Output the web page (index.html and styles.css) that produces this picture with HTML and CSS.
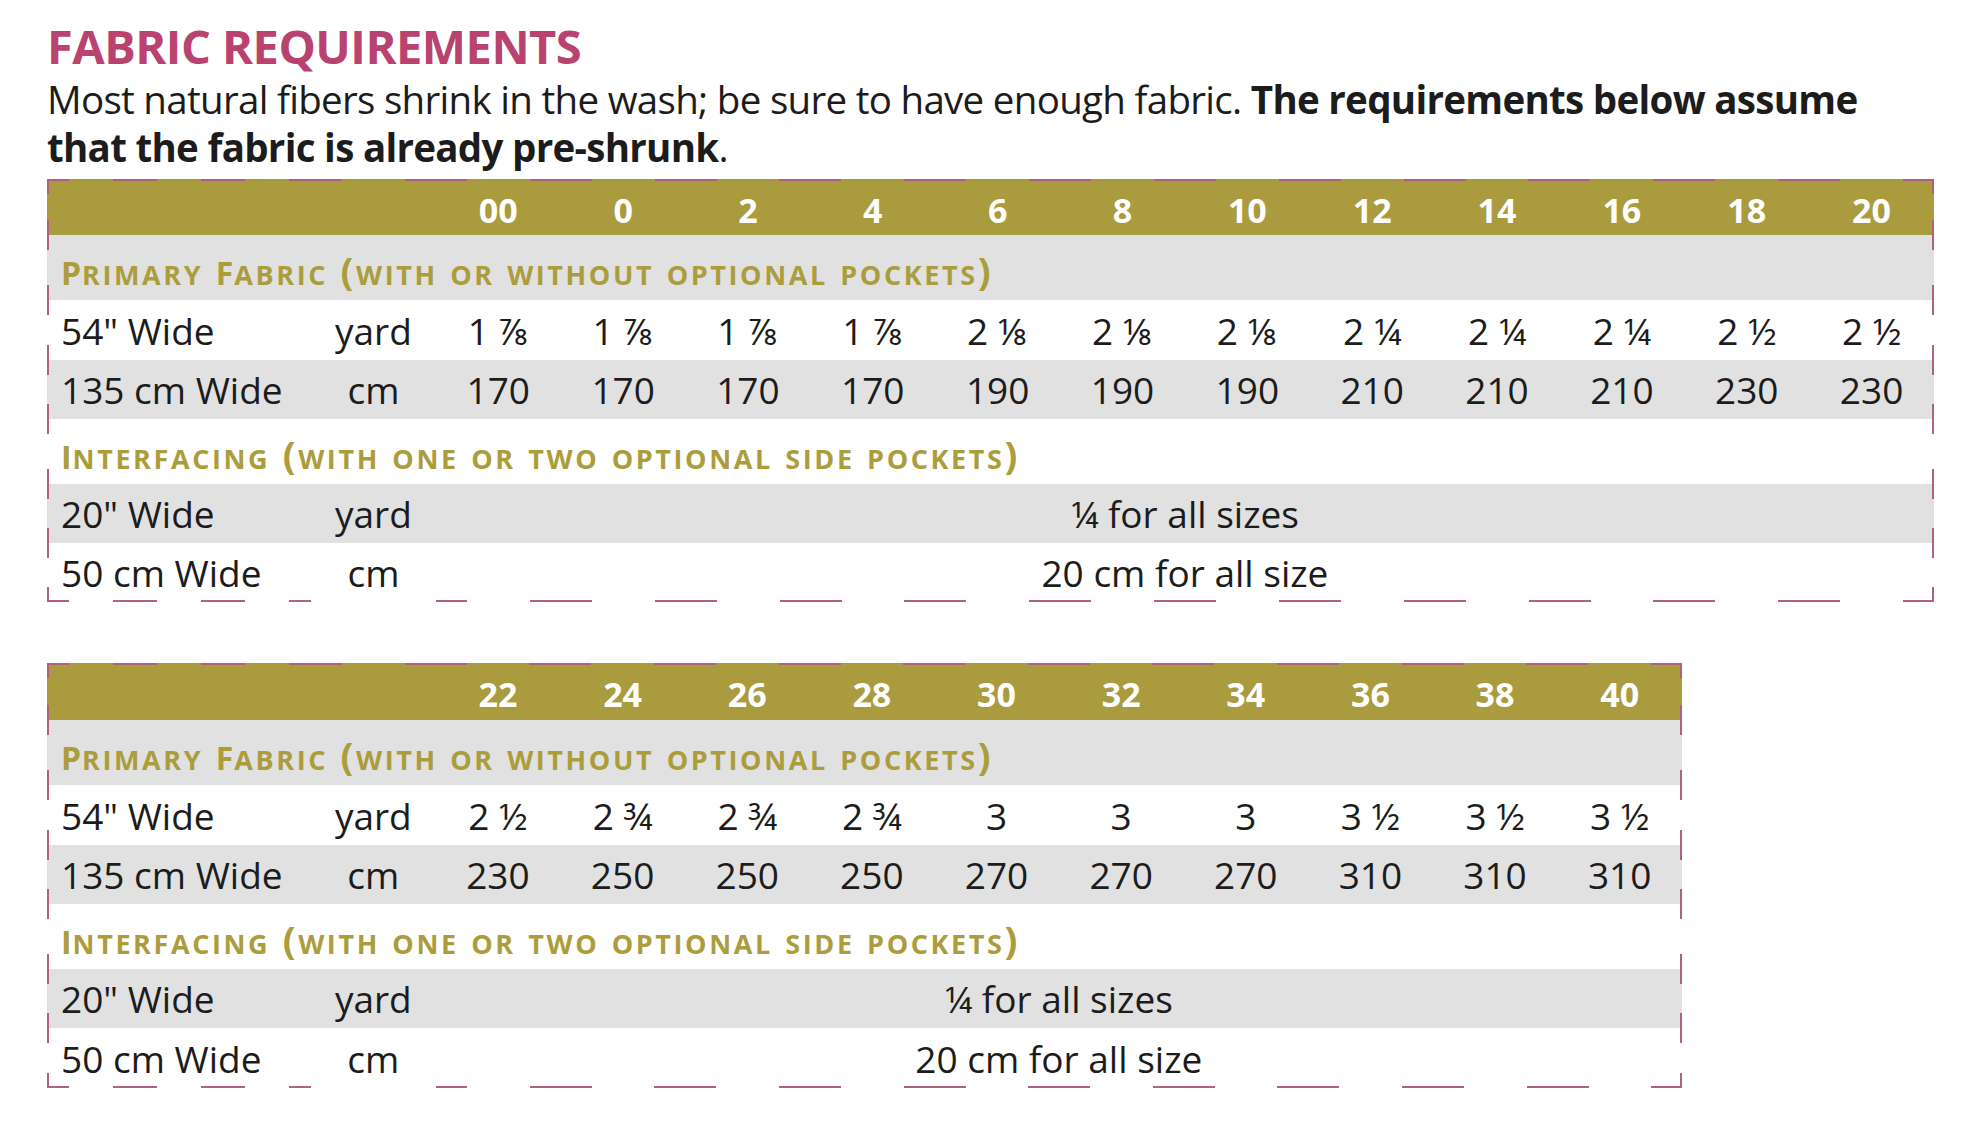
FILE: index.html
```html
<!DOCTYPE html>
<html lang="en">
<head>
<meta charset="utf-8">
<title>Fabric Requirements</title>
<link rel="stylesheet" href="styles.css">
</head>
<body>
<div class="page">
  <h1 class="title">FABRIC REQUIREMENTS</h1>
  <p class="intro">Most natural fibers shrink in the wash; be sure to have enough fabric. <b>The requirements below assume<br>that the fabric is already pre-shrunk</b>.</p>

  <div class="chart chart-wide">
    <div class="row row-head">
      <span class="cell label"></span><span class="cell unit"></span>
      <span class="cell">00</span><span class="cell">0</span><span class="cell">2</span><span class="cell">4</span><span class="cell">6</span><span class="cell">8</span><span class="cell">10</span><span class="cell">12</span><span class="cell">14</span><span class="cell">16</span><span class="cell">18</span><span class="cell">20</span>
    </div>
    <div class="row row-section gray">
      <span class="section-title"><span class="big">P</span>rimary <span class="big">F</span>abric (with or without optional pockets)</span>
    </div>
    <div class="row row-data">
      <span class="cell label">54" Wide</span><span class="cell unit">yard</span>
      <span class="cell">1 ⅞</span><span class="cell">1 ⅞</span><span class="cell">1 ⅞</span><span class="cell">1 ⅞</span><span class="cell">2 ⅛</span><span class="cell">2 ⅛</span><span class="cell">2 ⅛</span><span class="cell">2 ¼</span><span class="cell">2 ¼</span><span class="cell">2 ¼</span><span class="cell">2 ½</span><span class="cell">2 ½</span>
    </div>
    <div class="row row-data gray">
      <span class="cell label">135 cm Wide</span><span class="cell unit">cm</span>
      <span class="cell">170</span><span class="cell">170</span><span class="cell">170</span><span class="cell">170</span><span class="cell">190</span><span class="cell">190</span><span class="cell">190</span><span class="cell">210</span><span class="cell">210</span><span class="cell">210</span><span class="cell">230</span><span class="cell">230</span>
    </div>
    <div class="row row-section">
      <span class="section-title"><span class="big">I</span>nterfacing (with one or two optional side pockets)</span>
    </div>
    <div class="row row-data gray">
      <span class="cell label">20" Wide</span><span class="cell unit">yard</span>
      <span class="cell note">¼ for all sizes</span>
    </div>
    <div class="row row-data row-last">
      <span class="cell label">50 cm Wide</span><span class="cell unit">cm</span>
      <span class="cell note">20 cm for all size</span>
    </div>
  </div>

  <div class="chart chart-narrow">
    <div class="row row-head">
      <span class="cell label"></span><span class="cell unit"></span>
      <span class="cell">22</span><span class="cell">24</span><span class="cell">26</span><span class="cell">28</span><span class="cell">30</span><span class="cell">32</span><span class="cell">34</span><span class="cell">36</span><span class="cell">38</span><span class="cell">40</span>
    </div>
    <div class="row row-section gray">
      <span class="section-title"><span class="big">P</span>rimary <span class="big">F</span>abric (with or without optional pockets)</span>
    </div>
    <div class="row row-data">
      <span class="cell label">54" Wide</span><span class="cell unit">yard</span>
      <span class="cell">2 ½</span><span class="cell">2 ¾</span><span class="cell">2 ¾</span><span class="cell">2 ¾</span><span class="cell">3</span><span class="cell">3</span><span class="cell">3</span><span class="cell">3 ½</span><span class="cell">3 ½</span><span class="cell">3 ½</span>
    </div>
    <div class="row row-data gray">
      <span class="cell label">135 cm Wide</span><span class="cell unit">cm</span>
      <span class="cell">230</span><span class="cell">250</span><span class="cell">250</span><span class="cell">250</span><span class="cell">270</span><span class="cell">270</span><span class="cell">270</span><span class="cell">310</span><span class="cell">310</span><span class="cell">310</span>
    </div>
    <div class="row row-section">
      <span class="section-title"><span class="big">I</span>nterfacing (with one or two optional side pockets)</span>
    </div>
    <div class="row row-data gray">
      <span class="cell label">20" Wide</span><span class="cell unit">yard</span>
      <span class="cell note">¼ for all sizes</span>
    </div>
    <div class="row row-data row-last">
      <span class="cell label">50 cm Wide</span><span class="cell unit">cm</span>
      <span class="cell note">20 cm for all size</span>
    </div>
  </div>
</div>
</body>
</html>
```

FILE: styles.css
```css
:root {
  --olive: #a99b3e;
  --olive-text: #ac9d3c;
  --gray: #e1e1e1;
  --dash: #b0617f;
  --ink: #1c1c1c;
  --pink: #b9426f;
  --label-w: 264px;
}

* { box-sizing: border-box; }

body {
  margin: 0;
  background: #ffffff;
  color: var(--ink);
  font-family: "Open Sans", "Noto Sans", "DejaVu Sans", sans-serif;
}

.page {
  padding: 22px 0 0 47px;
}

.title {
  margin: 0 0 5px 0;
  font-size: 47px;
  line-height: 48px;
  font-weight: 700;
  letter-spacing: -0.5px;
  color: var(--pink);
}

.intro {
  margin: 0 0 8px 0;
  font-size: 38.5px;
  line-height: 48px;
  letter-spacing: -0.7px;
  white-space: nowrap;
}

.intro b { font-weight: 700; }

.chart {
  display: flex;
  flex-direction: column;
  margin-bottom: 61px;
}

.chart-wide { width: 1887px; --cols: 13; --colw: 124.846px; }
.chart-narrow { width: 1635px; --cols: 11; --colw: 124.636px; }

.row {
  display: grid;
  align-items: center;
  --edges:
    linear-gradient(var(--dash), var(--dash)) left top / 2px 15px no-repeat,
    linear-gradient(var(--dash), var(--dash)) left bottom / 2px 15px no-repeat,
    linear-gradient(var(--dash), var(--dash)) right top / 2px 15px no-repeat,
    linear-gradient(var(--dash), var(--dash)) right bottom / 2px 15px no-repeat;
  background: var(--edges), #ffffff;
}

.chart-wide .row { grid-template-columns: var(--label-w) repeat(13, 1fr); }
.chart-narrow .row { grid-template-columns: var(--label-w) repeat(11, 1fr); }

.row.gray {
  background: var(--edges), var(--gray);
}

.row-head {
  height: 56px;
  background:
    repeating-linear-gradient(90deg, var(--dash) 0 22px, transparent 22px 66px, var(--dash) 66px 88px) left top / var(--label-w) 2px no-repeat,
    repeating-linear-gradient(90deg, var(--dash) 0 31px, transparent 31px calc(var(--colw) - 31px), var(--dash) calc(var(--colw) - 31px) var(--colw)) right top / calc(100% - var(--label-w)) 2px no-repeat,
    var(--edges),
    var(--olive);
  color: #ffffff;
  font-weight: 700;
  font-size: 34px;
  padding-top: 5px;
}

.row-last {
  background:
    repeating-linear-gradient(90deg, var(--dash) 0 22px, transparent 22px 66px, var(--dash) 66px 88px) left bottom / var(--label-w) 2px no-repeat,
    repeating-linear-gradient(90deg, var(--dash) 0 31px, transparent 31px calc(var(--colw) - 31px), var(--dash) calc(var(--colw) - 31px) var(--colw)) right bottom / calc(100% - var(--label-w) - var(--colw)) 2px no-repeat,
    var(--edges),
    #ffffff;
}

.row-section {
  height: 65px;
  display: flex;
  align-items: center;
  padding-left: 14px;
}

.section-title {
  color: var(--olive-text);
  font-weight: 700;
  font-variant: small-caps;
  font-size: 38px;
  letter-spacing: 2.6px;
  line-height: 1;
  text-transform: lowercase;
  padding-top: 4px;
}

.section-title .big {
  text-transform: uppercase;
  font-size: 32px;
  letter-spacing: 1px;
}

.row-data {
  height: 59px;
  font-size: 37px;
}

.cell {
  text-align: center;
  white-space: nowrap;
  line-height: 1;
}

.cell.label {
  text-align: left;
  padding-left: 14px;
}

.cell.note {
  grid-column: 3 / -1;
}

.chart-wide .row-data:nth-child(3) { height: 60px; }
.chart-narrow .row-data:nth-child(3) { height: 60px; }
.chart-narrow .row-head { height: 57px; }
.chart-narrow .row-last { height: 60px; }
```
